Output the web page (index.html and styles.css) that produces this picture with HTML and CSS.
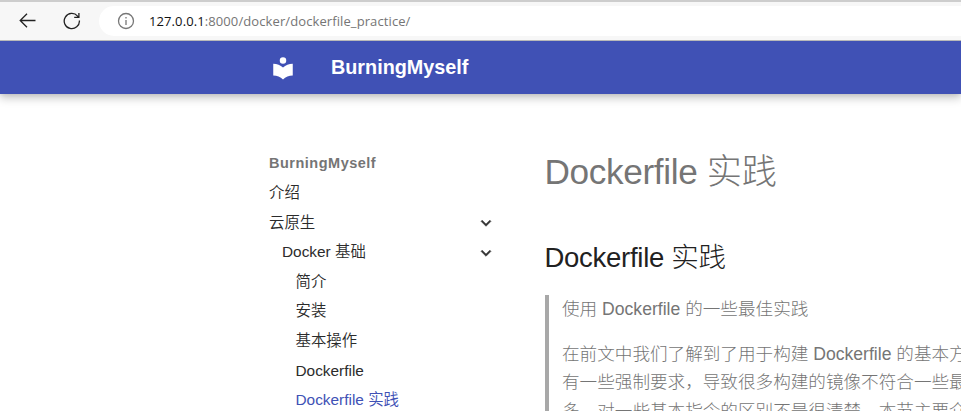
FILE: index.html
```html
<!DOCTYPE html>
<html lang="zh-CN">
<head>
<meta charset="utf-8">
<title>Dockerfile 实践 - BurningMyself</title>
<link rel="stylesheet" href="styles.css">
</head>
<body>
<div class="browser">
  <svg class="back" width="18" height="16" viewBox="0 0 18 16"><path d="M16.5 7.5H1.2M8 .7 1.2 7.5 8 14.3"/></svg>
  <svg class="reload" width="18" height="18" viewBox="0 0 18 18"><path d="M16.4 8.5A7.6 7.6 0 1 1 14.6 4.1L15.6 5.2M15.9.9V5.4H11.2"/></svg>
  <div class="address">
    <svg class="info" width="18" height="18" viewBox="0 0 18 18"><circle cx="9" cy="9" r="7.5"/><path d="M9 8v5M9 5v1.6"/></svg>
    <span class="url"><b>127.0.0.1</b>:8000/docker/dockerfile_practice/</span>
  </div>
</div>
<header class="header">
  <svg class="logo" width="26" height="26" viewBox="0 0 24 24"><path d="M12 8a3 3 0 0 0 3-3 3 3 0 0 0-3-3 3 3 0 0 0-3 3 3 3 0 0 0 3 3m0 3.54C9.64 9.35 6.5 8 3 8v11c3.5 0 6.64 1.35 9 3.54 2.36-2.19 5.5-3.54 9-3.54V8c-3.5 0-6.64 1.35-9 3.54z"/></svg>
  <span class="site-name">BurningMyself</span>
</header>
<main class="main">
  <nav class="nav">
    <div class="nav-title">BurningMyself</div>
    <a class="item">介绍</a>
    <a class="item">云原生<svg class="chevron" width="20" height="20" viewBox="0 0 24 24"><path d="M7.41 8.58 12 13.17l4.59-4.59L18 10l-6 6-6-6 1.41-1.42z"/></svg></a>
    <a class="item level2">Docker 基础<svg class="chevron" width="20" height="20" viewBox="0 0 24 24"><path d="M7.41 8.58 12 13.17l4.59-4.59L18 10l-6 6-6-6 1.41-1.42z"/></svg></a>
    <a class="item level3">简介</a>
    <a class="item level3">安装</a>
    <a class="item level3">基本操作</a>
    <a class="item level3">Dockerfile</a>
    <a class="item level3 active">Dockerfile 实践</a>
  </nav>
  <article class="content">
    <h1>Dockerfile 实践</h1>
    <h2>Dockerfile 实践</h2>
    <blockquote>
      <p>使用 Dockerfile 的一些最佳实践</p>
      <p>在前文中我们了解到了用于构建 Dockerfile 的基本方<br>有一些强制要求，导致很多构建的镜像不符合一些最<br>多，对一些基本指令的区别不是很清楚。本节主要介</p>
    </blockquote>
  </article>
</main>
</body>
</html>
```

FILE: styles.css
```css
* { box-sizing: border-box; }
body {
  margin: 0;
  height: 411px;
  overflow: hidden;
  background: #fff;
  color: #2b2b2b;
  font-family: "Liberation Sans", "Noto Sans CJK SC", sans-serif;
  font-weight: 300;
  display: flex;
  flex-direction: column;
}
.browser {
  flex: none;
  position: relative;
  z-index: 1;
  height: 41px;
  padding: 4px 0 4px 19px;
  display: flex;
  align-items: center;
  background: #f7f7f7;
  border-top: 2px solid #cdcdcd;
  border-bottom: 1px solid #b9b9b9;
}
.browser svg { fill: none; stroke: #222; stroke-width: 1.3; flex: none; }
.reload { margin-left: 26px; }
.address {
  flex: 1;
  height: 30px;
  margin-left: 18px;
  padding-left: 18px;
  border-radius: 15px 0 0 15px;
  background: #fff;
  display: flex;
  align-items: center;
}
.browser .info { stroke: #777; }
.url {
  margin-left: 14px;
  font: 400 13px/20px "Open Sans", sans-serif;
  letter-spacing: .1px;
  color: #757575;
  white-space: nowrap;
}
.url b { font-weight: 400; color: #111; }
.header {
  flex: none;
  height: 53px;
  padding-left: 270px;
  display: flex;
  align-items: center;
  background: #4051b5;
  box-shadow: 0 0 5px rgba(0,0,0,.12), 0 4px 9px rgba(0,0,0,.22);
  color: #fff;
}
.logo { fill: #fff; }
.site-name { margin-left: 35px; font-size: 19.8px; font-weight: 700; }
.main { flex: 1; min-height: 0; display: flex; padding-left: 269px; }
.nav { width: 223px; flex: none; padding-top: 54px; margin-right: 52.5px; font-weight: 350; }
.nav-title {
  height: 30px;
  line-height: 30px;
  font-size: 14.5px;
  font-weight: 700;
  letter-spacing: .5px;
  color: #757575;
}
.item {
  height: 29.6px;
  line-height: 29.6px;
  font-size: 15.4px;
  display: flex;
  align-items: center;
  white-space: nowrap;
}
.level2 { padding-left: 13px; }
.level3 { padding-left: 26.5px; }
.active { color: #4051b5; }
.chevron { margin-left: auto; margin-right: -4px; position: relative; top: 1px; fill: #333; stroke: #333; stroke-width: .6; }
.content { flex: 1; min-width: 0; padding-top: 55px; }
h1, h2 { margin: 0; font-weight: 300; letter-spacing: -.01em; white-space: nowrap; }
h1 { font-size: 35.2px; line-height: 46px; color: #757575; }
h2 { margin-top: 43px; font-size: 27.5px; line-height: 39px; color: #212121; }
blockquote {
  margin: 18px 0 0;
  padding-left: 13.5px;
  border-left: 4px solid #a8a8a8;
  color: #757575;
}
p { margin: 0 0 17px; font-size: 17.6px; line-height: 28.2px; white-space: nowrap; }
```
